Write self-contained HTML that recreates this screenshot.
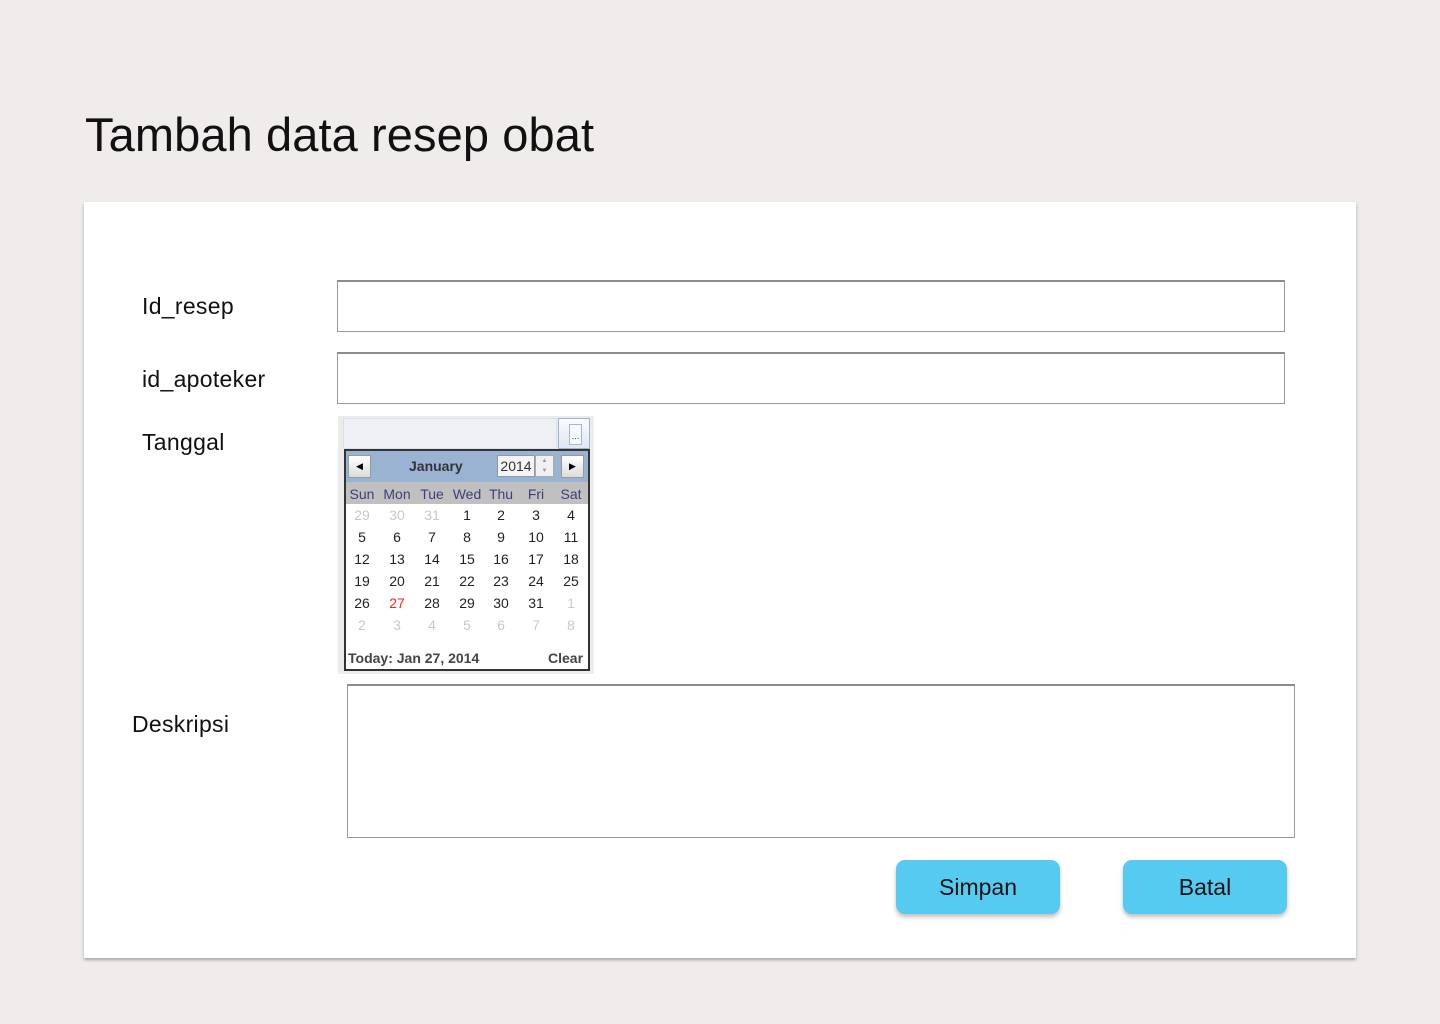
<!DOCTYPE html>
<html><head><style>
body{margin:0;width:1440px;height:1024px;background:#efeceb;font-family:"Liberation Sans",Arial,sans-serif;position:relative;overflow:hidden}
.a{position:absolute}
h1{position:absolute;left:85px;top:107px;margin:0;font-weight:400;font-size:47px;color:#111;letter-spacing:0.1px}
.card{left:84px;top:202px;width:1272px;height:756px;background:#fff;box-shadow:0 2px 3px rgba(0,0,0,.3)}
.lbl{font-size:23px;color:#111;letter-spacing:0.3px}
.inp{background:#fff;border:1px solid #9a9a9a;border-top:2px solid #8c8c8c;box-sizing:border-box}
.btn{background:#56cbf1;border-radius:9px;box-shadow:0 3px 4px rgba(0,0,0,.25);font-size:23px;color:#111;text-align:center;line-height:54px}
.d{position:absolute;width:34px;text-align:center;font-size:14px;line-height:16px}
</style></head><body>
<h1>Tambah data resep obat</h1>
<div class="a card"></div>
<div class="a lbl" style="left:142px;top:293px">Id_resep</div>
<div class="a lbl" style="left:142px;top:366px">id_apoteker</div>
<div class="a lbl" style="left:142px;top:429px">Tanggal</div>
<div class="a lbl" style="left:132px;top:711px">Deskripsi</div>
<div class="a inp" style="left:337px;top:280px;width:948px;height:52px"></div>
<div class="a inp" style="left:337px;top:352px;width:948px;height:52px"></div>
<div class="a inp" style="left:347px;top:684px;width:948px;height:154px"></div>

<div class="a" style="left:338px;top:416px;width:256px;height:258px;background:#ececec"></div>
<div class="a" style="left:343px;top:418px;width:214px;height:31px;background:#eef0f3;border:1px solid #d8e2ec;box-sizing:border-box"></div>
<div class="a" style="left:558px;top:418px;width:32px;height:31px;background:linear-gradient(#fafbfd,#dfe7f0);border:1px solid #9fb2c8;box-sizing:border-box"></div>
<div class="a" style="left:569px;top:424px;width:11px;height:19px;border:1px solid #a8b8cc;background:#f6f8fb;font-size:9px;line-height:22px;text-align:center;color:#333">...</div>
<div class="a" style="left:344px;top:449px;width:246px;height:222px;border:2px solid #333;box-sizing:border-box;background:#fff"></div>
<div class="a" style="left:346px;top:451px;width:242px;height:31px;background:#9ab3d3"></div>
<div class="a" style="left:348px;top:455px;width:23px;height:23px;background:linear-gradient(#fff,#dcdcdc);border:1px solid #999;box-sizing:border-box;font-size:9px;line-height:21px;text-align:center">◀</div>
<div class="a" style="left:561px;top:455px;width:23px;height:23px;background:linear-gradient(#fff,#dcdcdc);border:1px solid #999;box-sizing:border-box;font-size:9px;line-height:21px;text-align:center">▶</div>
<div class="a" style="left:409px;top:458px;font-size:14px;font-weight:bold;color:#333">January</div>
<div class="a" style="left:497px;top:455px;width:38px;height:22px;background:#f4f4f4;border:1px solid #8a9bb0;box-sizing:border-box;font-size:14px;line-height:20px;color:#333;text-align:center">2014</div>
<div class="a" style="left:535px;top:455px;width:19px;height:22px;background:#f0f0f0;border:1px solid #aaa;box-sizing:border-box;font-size:6px;line-height:10px;text-align:center;color:#999">▲<br>▼</div>
<div class="a" style="left:346px;top:482px;width:242px;height:22px;background:#c0c0c0"></div>
<div id="days"></div>
<div class="a" style="left:348px;top:650px;font-size:14px;font-weight:bold;color:#444">Today: Jan 27, 2014</div>
<div class="a" style="left:548px;top:650px;font-size:14px;font-weight:bold;color:#444">Clear</div>

<div class="a btn" style="left:896px;top:860px;width:164px;height:54px">Simpan</div>
<div class="a btn" style="left:1123px;top:860px;width:164px;height:54px">Batal</div>
<script>
var cx=[362,397,432,467,501,536,571],h="";
var names=["Sun","Mon","Tue","Wed","Thu","Fri","Sat"];
names.forEach(function(n,i){h+='<div class="d" style="left:'+(cx[i]-17)+'px;top:486px;color:#3b3f7a">'+n+'</div>';});
var rows=[[29,30,31,1,2,3,4],[5,6,7,8,9,10,11],[12,13,14,15,16,17,18],[19,20,21,22,23,24,25],[26,27,28,29,30,31,1],[2,3,4,5,6,7,8]];
rows.forEach(function(r,ri){r.forEach(function(v,ci){var g=(ri==0&&ci<3)||(ri==4&&ci==6)||ri==5;var c=g?'color:#c8c8c8':(ri==4&&ci==1?'color:#f22':'color:#222');h+='<div class="d" style="left:'+(cx[ci]-17)+'px;top:'+(507+ri*22)+'px;'+c+'">'+v+'</div>';});});
document.getElementById('days').innerHTML=h;
</script>
</body></html>
